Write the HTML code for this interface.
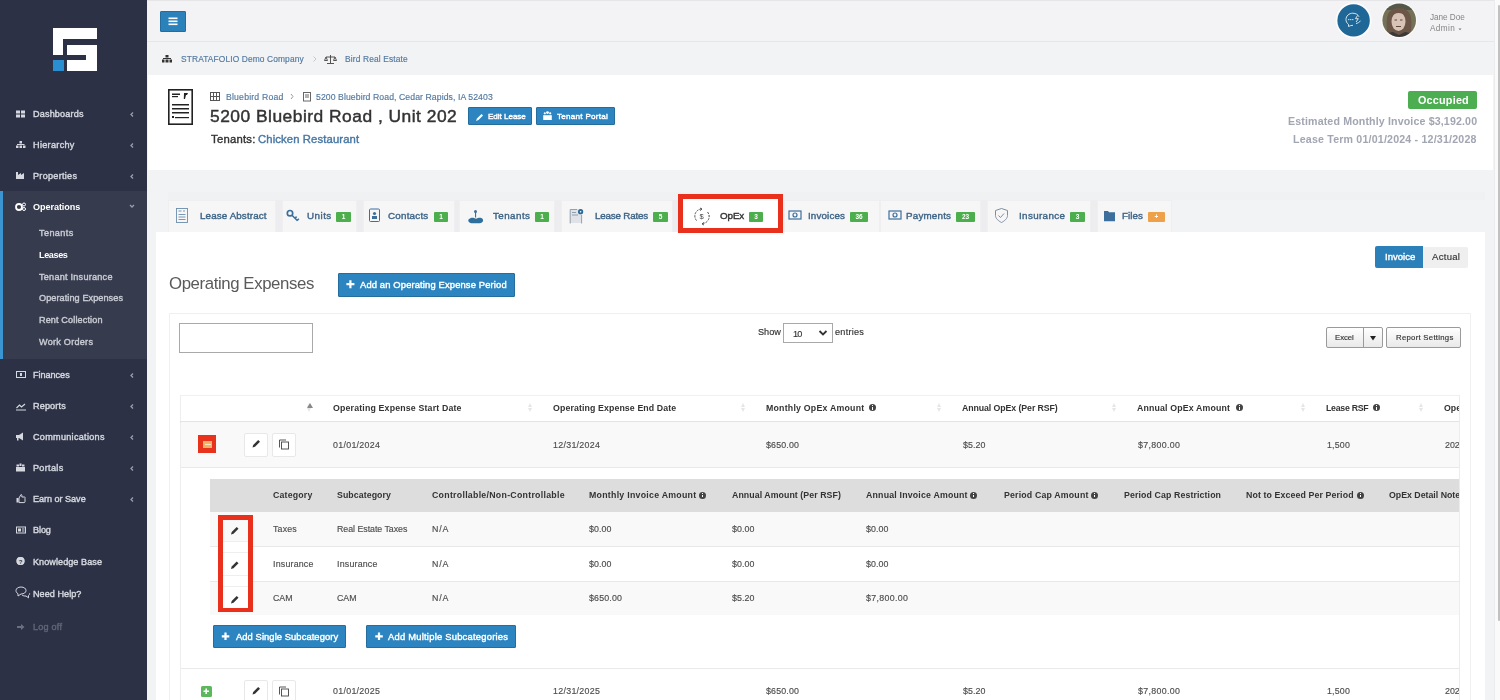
<!DOCTYPE html>
<html><head><meta charset="utf-8"><title>OpEx</title><style>
*{margin:0;padding:0;box-sizing:border-box}
html,body{width:1500px;height:700px;overflow:hidden;background:#f2f3f5;font-family:"Liberation Sans",sans-serif;position:relative}
.a{position:absolute}
.t{position:absolute;white-space:nowrap;line-height:1;will-change:transform}
svg{position:absolute;overflow:visible}
.btn{position:absolute;background:#2c85c0;border:1px solid #256d9c;border-radius:1px}
.badge{position:absolute;background:#4cae4c;border-radius:1px;height:10px}
.badge{color:#fff;font-size:6.5px;font-weight:bold;line-height:10px;text-align:center;will-change:transform}
.tab{position:absolute;top:200px;height:32px;background:#f6f6f7;border:1px solid #efeff1;border-bottom:none}
.sort{position:absolute;width:5px;height:9px}
.sort:before{content:"";position:absolute;left:0;top:0;border-left:2.5px solid transparent;border-right:2.5px solid transparent;border-bottom:4px solid #e6e6e6}
.sort:after{content:"";position:absolute;left:0;top:5px;border-left:2.5px solid transparent;border-right:2.5px solid transparent;border-top:4px solid #e6e6e6}
.info{position:absolute;width:7px;height:7px;border-radius:50%;background:#444}
.info:after{content:"";position:absolute;left:3px;top:3px;width:1.2px;height:2.8px;background:#fff}.info:before{content:"";position:absolute;left:3px;top:1.3px;width:1.2px;height:1px;background:#fff}
.ebtn{position:absolute;width:24px;height:24px;background:#fff;border:1px solid #e8e8e8;border-radius:2px}
.clipbox{position:absolute;left:0;top:0;width:1460px;height:700px;overflow:hidden}
</style></head><body>

<!-- sidebar -->
<div class="a" style="left:0;top:0;width:147px;height:700px;background:#2c3145"></div>
<div class="a" style="left:0;top:191px;width:147px;height:168px;background:#363b4e"></div>
<div class="a" style="left:0;top:191px;width:3px;height:168px;background:#3a95d0"></div>
<svg style="left:0;top:0" width="147" height="80">
 <rect x="53" y="28" width="44" height="11" fill="#fff"/>
 <rect x="53" y="28" width="10" height="27" fill="#fff"/>
 <rect x="67" y="45" width="30" height="26" fill="#fff"/>
 <rect x="63" y="55" width="23" height="5" fill="#2c3145"/>
 <rect x="53" y="60" width="11" height="11" fill="#2a8fd0"/>
</svg>
<!-- sidebar icons -->
<svg style="left:0;top:0" width="147" height="700" fill="#d5d8df">
 <!-- dashboards th-large -->
 <rect x="16" y="110.5" width="4" height="3"/><rect x="21" y="110.5" width="4" height="3"/><rect x="16" y="114.5" width="4" height="3"/><rect x="21" y="114.5" width="4" height="3"/>
 <!-- hierarchy sitemap -->
 <rect x="19.5" y="141" width="2.5" height="2.5"/><rect x="17" y="144" width="7.5" height="1"/><rect x="16" y="145.5" width="2.5" height="2.5"/><rect x="19.5" y="145.5" width="2.5" height="2.5"/><rect x="23" y="145.5" width="2.5" height="2.5"/>
 <!-- properties industry -->
 <path d="M16 172h2v3l3-2v2l3-2v6h-8z"/>
 <!-- operations cogs -->
 <circle cx="19" cy="207" r="3" fill="none" stroke="#fff" stroke-width="1.8"/><circle cx="24" cy="204.5" r="1.5" fill="none" stroke="#fff" stroke-width="1"/><circle cx="24" cy="209" r="1.5" fill="none" stroke="#fff" stroke-width="1"/>
 <!-- finances money -->
 <rect x="16.5" y="371.5" width="9" height="6" fill="none" stroke="#d5d8df" stroke-width="1"/><rect x="20" y="373" width="2" height="3"/>
 <!-- reports chart -->
 <path d="M16 409.5h10v1h-10z"/><path d="M16.5 408l3-3 2 2 3.5-3" fill="none" stroke="#d5d8df" stroke-width="1.2"/>
 <!-- communications bullhorn -->
 <path d="M16 435h3l4-2.5v8l-4-2.5h-3z"/><rect x="17" y="438" width="1.5" height="2.5"/>
 <!-- portals -->
 <rect x="16" y="467" width="9" height="4.5"/><rect x="16.5" y="464.5" width="2.5" height="2"/><rect x="22" y="464.5" width="2.5" height="2"/><rect x="19.5" y="463.5" width="2" height="2.5"/>
 <!-- earn or save thumbs -->
 <path d="M16.5 498h2v4.5h-2z"/><path d="M19 498l2-3.5c1 0 1 1 .8 2.5h2.7c.8 0 .9 1 .5 1.3v3.5c0 .5-.4.8-1 .8H19z" fill="none" stroke="#d5d8df" stroke-width="1"/>
 <!-- blog newspaper -->
 <rect x="16.5" y="527" width="9" height="6" fill="none" stroke="#d5d8df" stroke-width="1"/><rect x="18" y="528.5" width="3" height="3"/><rect x="22" y="528.5" width="2.5" height="1"/><rect x="22" y="530.5" width="2.5" height="1"/>
 <!-- knowledge base -->
 <circle cx="20.5" cy="561" r="4"/>
 <!-- need help bubbles -->
 <path d="M16 590.5c0-2 2-3.5 5-3.5s5 1.5 5 3.5-2 3.5-5 3.5l-3 2v-2.3c-1.3-.7-2-1.8-2-3.2z" fill="none" stroke="#d5d8df" stroke-width="1"/><path d="M22 595c1 .8 2.5 1.2 4 1l2.5 1.8v-2.3c.8-.6 1.2-1.3 1.2-2.2" fill="none" stroke="#d5d8df" stroke-width="1"/>
 <!-- log off -->
 <path d="M17 626h4v-2l3.5 3-3.5 3v-2h-4z" fill="#6b6f7e"/>
 <!-- chevrons -->
 <g fill="none" stroke="#9a9eab" stroke-width="1.3">
 <path d="M133 112.5l-2 2 2 2"/><path d="M133 143.5l-2 2 2 2"/><path d="M133 174.5l-2 2 2 2"/>
 <path d="M130 205l2 2 2-2"/>
 <path d="M133 373.5l-2 2 2 2"/><path d="M133 404.5l-2 2 2 2"/><path d="M133 435.5l-2 2 2 2"/><path d="M133 466.5l-2 2 2 2"/><path d="M133 497.5l-2 2 2 2"/>
 </g>
</svg>
<svg style="left:0;top:0" width="147" height="700"><circle cx="20.5" cy="561" r="4" fill="#d5d8df"/><text x="18.7" y="563.5" font-size="6" font-weight="bold" fill="#2c3145" font-family="Liberation Sans">?</text></svg>

<!-- navbar -->
<div class="a" style="left:147px;top:0;width:1347px;height:42px;background:#f3f3f5;border-top:1px solid #e6e6e8;border-bottom:1px solid #e6e7ea"></div>
<div class="btn" style="left:160px;top:11px;width:26px;height:21px;background:#2b82ba"></div>
<svg style="left:0;top:0" width="200" height="40"><rect x="168.5" y="17.5" width="9" height="1.6" fill="#fff"/><rect x="168.5" y="20.5" width="9" height="1.6" fill="#fff"/><rect x="168.5" y="23.5" width="9" height="1.6" fill="#fff"/></svg>
<!-- breadcrumb bar -->
<div class="a" style="left:147px;top:42px;width:1347px;height:33px;background:#f2f3f5"></div>
<svg style="left:0;top:0" width="420" height="80">
 <g fill="#333"><rect x="165.5" y="55" width="3" height="2.5"/><rect x="163" y="58" width="8" height="1"/><rect x="162" y="59.5" width="2.5" height="3"/><rect x="165.5" y="59.5" width="3" height="3"/><rect x="169.5" y="59.5" width="2.5" height="3"/></g>
 <path d="M313.5 56.5l2.5 2.5-2.5 2.5" fill="none" stroke="#c8c8c8" stroke-width="1"/>
 <g fill="none" stroke="#444" stroke-width="0.9"><path d="M326 57h9M330.5 55v8M327 63.5h7"/><path d="M326 57l-1.5 3.5h3zM335 57l-1.5 3.5h3z"/></g>
</svg>
<!-- top right -->
<svg style="left:0;top:0" width="1500" height="45">
 <defs><filter id="bl" x="-10%" y="-10%" width="120%" height="120%"><feGaussianBlur stdDeviation="0.6"/></filter><clipPath id="av"><circle cx="1399.2" cy="20.2" r="16.8"/></clipPath></defs>
 <circle cx="1353.6" cy="20.4" r="18" fill="#fbfcfd"/>
 <circle cx="1353.6" cy="20.4" r="16.2" fill="#1e6796"/>
 <g fill="none" stroke="#e8f0f6" stroke-width="0.9">
  <path d="M1348.5 26.5v-2.2c-1.8-1.2-2.5-3-2.5-4.8 0-3.6 3-6.3 6.8-6.3 3 0 5.2 1.4 6.2 3.6"/>
  <path d="M1348.5 26.5c1.5-.8 3-1.2 4.5-1.2"/>
  <path d="M1357.5 15.5l-2 3.2h2.8l-2.2 3.3M1356 23.5c1.8-.3 3.5-1.2 4.5-2.8"/>
 </g>
 <g fill="#e8f0f6"><circle cx="1348.8" cy="19.6" r=".7"/><circle cx="1350.8" cy="19.6" r=".7"/><circle cx="1352.8" cy="19.6" r=".7"/></g>
 <circle cx="1399.2" cy="20.2" r="18" fill="#fbfbfb"/>
 <g clip-path="url(#av)"><g filter="url(#bl)">
  <rect x="1380" y="2" width="40" height="36" fill="#737159"/>
  <rect x="1380" y="2" width="40" height="8" fill="#55584a"/>
  <path d="M1388 38c-1-8-2-14-1-20 1-7 6-10 12-10s11 3 12 10c1 6 0 12-1 20z" fill="#6c5646"/>
  <ellipse cx="1398.5" cy="21.5" rx="7" ry="9.5" fill="#d9c2b6"/>
  <path d="M1391.5 17c2-5 5-6.5 8-6.5s5 1 7 5.5c-3-2-5-3-8-3s-5 1.5-7 4z" fill="#6c5646"/>
  <g fill="#5b4a42"><rect x="1394.5" y="19.5" width="2.5" height="1"/><rect x="1400" y="19.5" width="2.5" height="1"/><rect x="1396" y="26" width="5" height="1"/></g>
  <path d="M1384 38c2-4 6-6 9-6l6 3 6-3c3 0 7 2 9 6z" fill="#3a3939"/>
 </g></g>
 <path d="M1458.5 28.5h3l-1.5 1.8z" fill="#777"/>
</svg>

<!-- header panel -->
<div class="a" style="left:148px;top:75px;width:1345px;height:95px;background:#fff"></div>
<svg style="left:0;top:0" width="700" height="170">
 <g fill="none" stroke="#222" stroke-width="1.6"><rect x="168.8" y="89.8" width="23.4" height="34.4"/></g>
 <g fill="#222"><rect x="172" y="93.5" width="8" height="1.5"/><rect x="172" y="96" width="6" height="1.2"/><path d="M184 93h4l-1 2h-1l-1 4h-1.2z"/>
 <rect x="172" y="104" width="17" height="1.5"/><rect x="172" y="108" width="17" height="1.5"/><rect x="172" y="112" width="17" height="1.5"/>
 <rect x="172" y="116" width="2" height="2"/><rect x="175" y="117" width="14" height="1.2"/></g>
 <!-- tiny bluebird icons -->
 <g fill="none" stroke="#555" stroke-width="1"><rect x="210.5" y="92.5" width="9" height="8"/><path d="M210.5 96.5h9M213.5 92.5v8M216.5 92.5v8"/></g>
 <path d="M291 94l2 2.5-2 2.5" fill="none" stroke="#999" stroke-width="1"/>
 <g fill="none" stroke="#666" stroke-width="1"><rect x="303.5" y="92.5" width="7" height="8.5"/><path d="M305 95h4M305 97h4"/></g>
</svg>
<div class="btn" style="left:468px;top:107px;width:64px;height:17.5px"></div>
<div class="btn" style="left:536px;top:107px;width:79px;height:17.5px"></div>
<svg style="left:0;top:0" width="700" height="170">
 <path d="M476 121l1-2.5 4.5-4.5 1.5 1.5-4.5 4.5z" fill="#fff"/>
 <g fill="#fff"><circle cx="544.8" cy="113.3" r="1.1"/><circle cx="547.5" cy="112.6" r="1.4"/><circle cx="550.2" cy="113.3" r="1.1"/><path d="M543.2 115.2h8.6v4.8h-8.6z"/></g>
</svg>
<div class="a" style="left:1408px;top:91px;width:69px;height:18px;background:#4cae50;border-radius:2px"></div>

<!-- tabs -->
<div class="a" style="left:168px;top:192px;width:1317px;height:8px;background:#f0f1f3"></div>
<div class="a" style="left:168px;top:200px;width:1004px;height:32px;background:#ededef"></div>
<div class="tab" style="left:168px;width:108px"></div>
<div class="tab" style="left:282px;width:75px"></div>
<div class="tab" style="left:363px;width:92px"></div>
<div class="tab" style="left:459px;width:96px"></div>
<div class="tab" style="left:561px;width:112px"></div>
<div class="tab" style="left:784px;width:96px"></div>
<div class="tab" style="left:880px;width:101px"></div>
<div class="tab" style="left:987px;width:104px"></div>
<div class="tab" style="left:1097px;width:75px"></div>
<!-- content panel -->
<div class="a" style="left:156px;top:232px;width:1329px;height:468px;background:#fff"></div>
<!-- active tab -->
<div class="a" style="left:678px;top:194px;width:105px;height:39px;border:5px solid #e8301c;background:#fff"></div>

<div class="badge" style="left:336px;top:212px;width:15px">1</div>
<div class="badge" style="left:434px;top:212px;width:14px">1</div>
<div class="badge" style="left:535px;top:212px;width:14px">1</div>
<div class="badge" style="left:653px;top:212px;width:15px">5</div>
<div class="badge" style="left:749px;top:212px;width:14px">3</div>
<div class="badge" style="left:850px;top:212px;width:18px">36</div>
<div class="badge" style="left:956px;top:212px;width:19px">23</div>
<div class="badge" style="left:1070px;top:212px;width:15px">3</div>
<div class="badge" style="left:1148px;top:212px;width:17px;background:#efa14a">+</div>
<svg style="left:0;top:0" width="1200" height="240">
 <g fill="none" stroke="#3d6f9c" stroke-width="1">
  <!-- lease abstract -->
  <rect x="176.5" y="208.5" width="11" height="14" stroke="#6c8cab" stroke-width="0.9"/><path d="M178.5 214.5h7M178.5 217h7M178.5 219.5h7M178.5 211h3M183 211h2" stroke="#6c8cab" stroke-width="0.9"/>
  <!-- key -->
  <circle cx="290" cy="213.2" r="2.7" stroke-width="1.7"/><path d="M292 215.2l5.5 5.5M295 218.2l1.6-1.6M297.2 220.4l1.6-1.6" stroke-width="1.5"/>
  <!-- contacts -->
  <rect x="369.5" y="209" width="10" height="12.5" rx="1"/>
  <!-- insurance shield -->
  <path d="M995.5 210.5l6-2 6 2v5c0 3-3 5.5-6 7-3-1.5-6-4-6-7z" stroke="#7a8ea3"/><path d="M998.5 215.5l2 2 3.5-4" stroke="#7a8ea3"/>
  <!-- opex icon -->
  <path d="M696.5 220.5a7 7 0 0 1 5-11.5M707.5 212a7 7 0 0 1-5 11.5" stroke="#444" stroke-width="1" stroke-dasharray="2.2 1.1"/><path d="M700 208l2 1-1.8 1.6M704 225l-2-1 1.8-1.6" stroke="#444" stroke-width="0.9"/>
 </g>
 <g fill="#3d6f9c">
  <circle cx="374.5" cy="213.5" r="1.6"/><rect x="372" y="216" width="5" height="3"/>
  <!-- tenants -->
  <circle cx="475.5" cy="211.5" r="1.5"/><rect x="475" y="212" width="1.1" height="5.5"/><path d="M468.5 219.5c1.5-1.5 3.5-2 5.5-1.5l2 .8 2-.8c2-.5 4.5 0 5 1.8.5 2-1.5 3.5-4 3.5h-6.5c-3 0-4.8-1.8-4-3.8z" fill="#2f6f9c"/>
  <!-- lease rates -->
  
  <!-- files folder -->
  <path d="M1104 211h4l1 1.2h6v9h-11z"/>
 </g>
 <rect x="570" y="209.5" width="11.5" height="13.5" fill="#dfe3e8"/><g fill="none" stroke="#8a97a5" stroke-width="0.9"><path d="M570.2 223.5v-14h7M581.6 215v8.5"/><path d="M572 212.5h4M572 215h6"/></g><circle cx="580.6" cy="211.7" r="2.6" fill="#2f6a96"/><circle cx="580.6" cy="211.7" r="0.8" fill="#fff"/>
 <g fill="none" stroke="#3d6f9c" stroke-width="1.2"><rect x="789" y="211" width="12" height="8"/><circle cx="795" cy="215" r="2"/><rect x="889" y="211" width="12" height="8"/><circle cx="895" cy="215" r="2"/></g>
 <text x="699.6" y="219.3" font-size="7.5" fill="#444" font-family="Liberation Sans">$</text>
</svg>

<!-- invoice/actual -->
<div class="a" style="left:1375px;top:246px;width:48px;height:22px;background:#2b80b9;border-radius:2px 0 0 2px"></div>
<div class="a" style="left:1423px;top:247px;width:44.5px;height:20.5px;background:#efefef;border-radius:0 2px 2px 0"></div>

<div class="btn" style="left:338px;top:273px;width:177px;height:24px"></div>
<svg style="left:0;top:0" width="600" height="300"><path d="M346.4 284.2h8M350.4 280.2v8" stroke="#fff" stroke-width="2.2"/></svg>

<!-- portlet -->
<div class="a" style="left:168.5px;top:312.5px;width:1302.5px;height:400px;border:1px solid #f0f0f0"></div>
<div class="a" style="left:179px;top:323px;width:134px;height:29.5px;border:1px solid #a9a9a9"></div>
<div class="a" style="left:783px;top:323px;width:50px;height:20px;border:1px solid #a9a9a9"></div>
<svg style="left:0;top:0" width="900" height="400"><path d="M819.5 331l3.5 3.5 3.5-3.5" fill="none" stroke="#333" stroke-width="1.8"/></svg>
<div class="a" style="left:1326px;top:327px;width:56.5px;height:20.5px;border:1px solid #9a9a9a;border-radius:2px;background:linear-gradient(#fff,#e9e9e9)"></div>
<div class="a" style="left:1362.5px;top:327px;width:1px;height:20.5px;background:#9a9a9a"></div>
<div class="a" style="left:1386px;top:327px;width:74.5px;height:20.5px;border:1px solid #9a9a9a;border-radius:2px;background:linear-gradient(#fff,#e9e9e9)"></div>
<svg style="left:0;top:0" width="1500" height="400"><path d="M1370 336h6l-3 4.5z" fill="#222"/></svg>

<!-- table -->
<div class="clipbox">
 <div class="a" style="left:180px;top:395px;width:1400px;height:305px;border-left:1px solid #eeeeee;border-top:1px solid #f0f0f0"></div>
 <div class="a" style="left:180px;top:421px;width:1400px;height:2px;background:#e3e3e3"></div>
 <div class="a" style="left:181px;top:422px;width:1400px;height:45px;background:#f9f9f9"></div>
 <div class="a" style="left:181px;top:466.5px;width:1400px;height:1px;background:#e9e9e9"></div>
 <!-- nested -->
 <div class="a" style="left:210px;top:479px;width:1400px;height:33px;background:#dddddd"></div>
 <div class="a" style="left:210px;top:512px;width:1400px;height:34px;background:#f9f9f9"></div>
 <div class="a" style="left:210px;top:546px;width:1400px;height:1px;background:#e8e8e8"></div>
 <div class="a" style="left:210px;top:581px;width:1400px;height:1px;background:#e8e8e8"></div>
 <div class="a" style="left:210px;top:582px;width:1400px;height:33px;background:#f9f9f9"></div>
 <div class="a" style="left:181px;top:668px;width:1400px;height:1px;background:#e9e9e9"></div>
 <!-- sort icons -->
 <div class="sort" style="left:306.5px;top:403px"></div>
 <div class="sort" style="left:528px;top:403px"></div>
 <div class="sort" style="left:740.5px;top:403px"></div>
 <div class="sort" style="left:936.5px;top:403px"></div>
 <div class="sort" style="left:1112px;top:403px"></div>
 <div class="sort" style="left:1301px;top:403px"></div>
 <div class="sort" style="left:1419px;top:403px"></div>
 <div class="info" style="left:869px;top:404px"></div>
 <div class="info" style="left:1236px;top:404px"></div>
 <div class="info" style="left:1373px;top:404px"></div>
 <div class="info" style="left:699px;top:491.5px"></div>
 <div class="info" style="left:970px;top:491.5px"></div>
 <div class="info" style="left:1091px;top:491.5px"></div>
 <div class="info" style="left:1357px;top:491.5px"></div>
 <div class="t" style="top:403.87px;font-size:8.78px;color:#333333;font-weight:bold;letter-spacing:0.176px;left:332.50px;">Operating Expense Start Date</div>
<div class="t" style="top:403.87px;font-size:8.78px;color:#333333;font-weight:bold;letter-spacing:0.115px;left:553.00px;">Operating Expense End Date</div>
<div class="t" style="top:403.87px;font-size:8.78px;color:#333333;font-weight:bold;letter-spacing:0.224px;left:765.80px;">Monthly OpEx Amount</div>
<div class="t" style="top:403.87px;font-size:8.78px;color:#333333;font-weight:bold;letter-spacing:-0.082px;left:962.00px;">Annual OpEx (Per RSF)</div>
<div class="t" style="top:403.87px;font-size:8.78px;color:#333333;font-weight:bold;letter-spacing:0.160px;left:1137.00px;">Annual OpEx Amount</div>
<div class="t" style="top:403.87px;font-size:8.78px;color:#333333;font-weight:bold;letter-spacing:-0.275px;left:1326.00px;">Lease RSF</div>
<div class="t" style="top:403.87px;font-size:8.78px;color:#333333;font-weight:bold;left:1444.00px;">Operating Expense Period</div>
<div class="t" style="top:440.53px;font-size:8.83px;color:#4d4d4d;-webkit-text-stroke:0.15px #4d4d4d;letter-spacing:0.299px;left:333.00px;">01/01/2024</div>
<div class="t" style="top:440.53px;font-size:8.83px;color:#4d4d4d;-webkit-text-stroke:0.15px #4d4d4d;letter-spacing:0.299px;left:553.00px;">12/31/2024</div>
<div class="t" style="top:440.53px;font-size:8.83px;color:#4d4d4d;-webkit-text-stroke:0.15px #4d4d4d;letter-spacing:0.158px;left:766.00px;">$650.00</div>
<div class="t" style="top:440.53px;font-size:8.83px;color:#4d4d4d;-webkit-text-stroke:0.15px #4d4d4d;letter-spacing:0.069px;left:963.00px;">$5.20</div>
<div class="t" style="top:440.53px;font-size:8.83px;color:#4d4d4d;-webkit-text-stroke:0.15px #4d4d4d;letter-spacing:0.324px;left:1138.00px;">$7,800.00</div>
<div class="t" style="top:440.53px;font-size:8.83px;color:#4d4d4d;-webkit-text-stroke:0.15px #4d4d4d;letter-spacing:0.194px;left:1327.00px;">1,500</div>
<div class="t" style="top:440.53px;font-size:8.83px;color:#4d4d4d;-webkit-text-stroke:0.15px #4d4d4d;left:1445.00px;">2024</div>
<div class="t" style="top:686.53px;font-size:8.83px;color:#4d4d4d;-webkit-text-stroke:0.15px #4d4d4d;letter-spacing:0.299px;left:333.00px;">01/01/2025</div>
<div class="t" style="top:686.53px;font-size:8.83px;color:#4d4d4d;-webkit-text-stroke:0.15px #4d4d4d;letter-spacing:0.299px;left:553.00px;">12/31/2025</div>
<div class="t" style="top:686.53px;font-size:8.83px;color:#4d4d4d;-webkit-text-stroke:0.15px #4d4d4d;letter-spacing:0.158px;left:766.00px;">$650.00</div>
<div class="t" style="top:686.53px;font-size:8.83px;color:#4d4d4d;-webkit-text-stroke:0.15px #4d4d4d;letter-spacing:0.069px;left:963.00px;">$5.20</div>
<div class="t" style="top:686.53px;font-size:8.83px;color:#4d4d4d;-webkit-text-stroke:0.15px #4d4d4d;letter-spacing:0.324px;left:1138.00px;">$7,800.00</div>
<div class="t" style="top:686.53px;font-size:8.83px;color:#4d4d4d;-webkit-text-stroke:0.15px #4d4d4d;letter-spacing:0.194px;left:1327.00px;">1,500</div>
<div class="t" style="top:686.53px;font-size:8.83px;color:#4d4d4d;-webkit-text-stroke:0.15px #4d4d4d;left:1445.00px;">2024</div>
<div class="t" style="top:490.87px;font-size:8.78px;color:#333333;font-weight:bold;letter-spacing:0.188px;left:272.60px;">Category</div>
<div class="t" style="top:490.87px;font-size:8.78px;color:#333333;font-weight:bold;letter-spacing:0.083px;left:337.30px;">Subcategory</div>
<div class="t" style="top:490.87px;font-size:8.78px;color:#333333;font-weight:bold;letter-spacing:0.283px;left:431.70px;">Controllable/Non-Controllable</div>
<div class="t" style="top:490.87px;font-size:8.78px;color:#333333;font-weight:bold;letter-spacing:0.272px;left:589.30px;">Monthly Invoice Amount</div>
<div class="t" style="top:490.87px;font-size:8.78px;color:#333333;font-weight:bold;letter-spacing:0.072px;left:732.30px;">Annual Amount (Per RSF)</div>
<div class="t" style="top:490.87px;font-size:8.78px;color:#333333;font-weight:bold;letter-spacing:0.196px;left:866.00px;">Annual Invoice Amount</div>
<div class="t" style="top:490.87px;font-size:8.78px;color:#333333;font-weight:bold;letter-spacing:0.179px;left:1003.60px;">Period Cap Amount</div>
<div class="t" style="top:490.87px;font-size:8.78px;color:#333333;font-weight:bold;letter-spacing:0.118px;left:1123.50px;">Period Cap Restriction</div>
<div class="t" style="top:490.87px;font-size:8.78px;color:#333333;font-weight:bold;letter-spacing:0.120px;left:1245.50px;">Not to Exceed Per Period</div>
<div class="t" style="top:490.87px;font-size:8.78px;color:#333333;font-weight:bold;left:1388.70px;">OpEx Detail Notes</div>
</div>
<div class="a" style="left:1459px;top:395px;width:1px;height:305px;background:#ececec"></div>
<div class="a" style="left:306.5px;top:403px;border-left:3px solid transparent;border-right:3px solid transparent;border-bottom:5px solid #888"></div>

<!-- row controls -->
<div class="a" style="left:198px;top:435px;width:18px;height:18px;background:#e8321c"></div>
<div class="a" style="left:203px;top:441px;width:9px;height:7px;background:#f4b266"></div>
<div class="a" style="left:204.5px;top:444px;width:6px;height:1px;background:#fbe3c4"></div>
<div class="ebtn" style="left:244px;top:432.5px"></div>
<div class="ebtn" style="left:272px;top:432.5px"></div>
<div class="ebtn" style="left:244px;top:679.5px"></div>
<div class="ebtn" style="left:272px;top:679.5px"></div>
<div class="a" style="left:201px;top:686px;width:10.5px;height:10.5px;background:#5cb85c;border-radius:1.5px"></div>
<svg style="left:0;top:0" width="400" height="700">
 <path d="M203.5 691.2h5.5M206.2 688.5v5.5" stroke="#fff" stroke-width="1.6"/>
 <g fill="#333"><path d="M252.5 447.5l.7-2.5 5-5 1.8 1.8-5 5z"/><path d="M252.5 694.5l.7-2.5 5-5 1.8 1.8-5 5z"/></g>
 <g fill="none" stroke="#444" stroke-width="0.9"><path d="M279.5 447.5v-7.5h6.5"/><rect x="281.5" y="442" width="7" height="7"/><path d="M279.5 694.5v-7.5h6.5"/><rect x="281.5" y="689" width="7" height="7"/></g>
</svg>
<!-- nested edit buttons + red annotation -->
<div class="a" style="left:218px;top:515px;width:35px;height:97px;border:5px solid #e8301c"></div>
<div class="a" style="left:223px;top:519.5px;width:25px;height:88px;background:#fff"></div>
<div class="a" style="left:223px;top:519.5px;width:25px;height:22px;border-bottom:1px solid #eee;background:#f9f9f9"></div>
<div class="a" style="left:223px;top:552px;width:25px;height:24px;border:1px solid #eee;border-left:none;border-right:none"></div>
<div class="a" style="left:223px;top:586px;width:25px;height:21.5px;border-top:1px solid #eee"></div>
<svg style="left:0;top:0" width="400" height="700">
 <g fill="#333"><path d="M231 534.5l.7-2.5 5-5 1.8 1.8-5 5z"/><path d="M231 569l.7-2.5 5-5 1.8 1.8-5 5z"/><path d="M231 603.5l.7-2.5 5-5 1.8 1.8-5 5z"/></g>
</svg>
<div class="btn" style="left:213px;top:625px;width:133px;height:23px"></div>
<div class="btn" style="left:366px;top:625px;width:149.5px;height:23px"></div>
<svg style="left:0;top:0" width="600" height="700"><path d="M221.8 636.3h7.5M225.5 632.6v7.5M375.3 636.3h7.5M379 632.6v7.5" stroke="#fff" stroke-width="2.2"/></svg>

<!-- right edge / scrollbar -->
<div class="a" style="left:1494px;top:0;width:6px;height:700px;background:#fafafa;border-left:1px solid #ececec"></div>
<div class="a" style="left:1497.5px;top:5px;width:2.5px;height:616px;background:#c1c1c1;border-radius:2px"></div>
<div class="t" style="top:110.31px;font-size:9.08px;color:#d5d8df;-webkit-text-stroke:0.4px #d5d8df;letter-spacing:0.164px;left:32.50px;">Dashboards</div>
<div class="t" style="top:141.31px;font-size:9.08px;color:#d5d8df;-webkit-text-stroke:0.4px #d5d8df;letter-spacing:0.321px;left:32.50px;">Hierarchy</div>
<div class="t" style="top:172.31px;font-size:9.08px;color:#d5d8df;-webkit-text-stroke:0.4px #d5d8df;letter-spacing:0.283px;left:32.50px;">Properties</div>
<div class="t" style="top:203.31px;font-size:9.08px;color:#ffffff;font-weight:bold;letter-spacing:-0.067px;left:32.50px;">Operations</div>
<div class="t" style="top:229.31px;font-size:9.08px;color:#c9ccd4;-webkit-text-stroke:0.4px #c9ccd4;letter-spacing:0.395px;left:39.00px;">Tenants</div>
<div class="t" style="top:251.31px;font-size:9.08px;color:#ffffff;font-weight:bold;letter-spacing:-0.375px;left:39.00px;">Leases</div>
<div class="t" style="top:272.81px;font-size:9.08px;color:#c9ccd4;-webkit-text-stroke:0.4px #c9ccd4;letter-spacing:0.252px;left:39.00px;">Tenant Insurance</div>
<div class="t" style="top:294.31px;font-size:9.08px;color:#c9ccd4;-webkit-text-stroke:0.4px #c9ccd4;letter-spacing:0.099px;left:39.00px;">Operating Expenses</div>
<div class="t" style="top:316.31px;font-size:9.08px;color:#c9ccd4;-webkit-text-stroke:0.4px #c9ccd4;letter-spacing:0.134px;left:39.00px;">Rent Collection</div>
<div class="t" style="top:337.81px;font-size:9.08px;color:#c9ccd4;-webkit-text-stroke:0.4px #c9ccd4;letter-spacing:0.264px;left:39.00px;">Work Orders</div>
<div class="t" style="top:371.31px;font-size:9.08px;color:#d5d8df;-webkit-text-stroke:0.4px #d5d8df;letter-spacing:-0.024px;left:32.50px;">Finances</div>
<div class="t" style="top:402.31px;font-size:9.08px;color:#d5d8df;-webkit-text-stroke:0.4px #d5d8df;letter-spacing:0.147px;left:32.50px;">Reports</div>
<div class="t" style="top:433.31px;font-size:9.08px;color:#d5d8df;-webkit-text-stroke:0.4px #d5d8df;letter-spacing:0.294px;left:32.50px;">Communications</div>
<div class="t" style="top:464.31px;font-size:9.08px;color:#d5d8df;-webkit-text-stroke:0.4px #d5d8df;letter-spacing:0.319px;left:32.50px;">Portals</div>
<div class="t" style="top:495.31px;font-size:9.08px;color:#d5d8df;-webkit-text-stroke:0.4px #d5d8df;letter-spacing:-0.028px;left:32.50px;">Earn or Save</div>
<div class="t" style="top:526.31px;font-size:9.08px;color:#d5d8df;-webkit-text-stroke:0.4px #d5d8df;letter-spacing:-0.085px;left:32.50px;">Blog</div>
<div class="t" style="top:557.81px;font-size:9.08px;color:#d5d8df;-webkit-text-stroke:0.4px #d5d8df;letter-spacing:0.061px;left:32.50px;">Knowledge Base</div>
<div class="t" style="top:589.81px;font-size:9.08px;color:#d5d8df;-webkit-text-stroke:0.4px #d5d8df;letter-spacing:0.053px;left:32.50px;">Need Help?</div>
<div class="t" style="top:623.31px;font-size:9.08px;color:#626676;-webkit-text-stroke:0.4px #626676;letter-spacing:0.219px;left:32.50px;">Log off</div>
<div class="t" style="top:55.10px;font-size:8.39px;color:#52789f;-webkit-text-stroke:0.15px #52789f;letter-spacing:0.126px;left:181.00px;">STRATAFOLIO Demo Company</div>
<div class="t" style="top:55.10px;font-size:8.39px;color:#52789f;-webkit-text-stroke:0.15px #52789f;letter-spacing:0.149px;left:345.00px;">Bird Real Estate</div>
<div class="t" style="top:13.85px;font-size:8.21px;color:#858585;letter-spacing:-0.044px;left:1430.00px;">Jane Doe</div>
<div class="t" style="top:24.65px;font-size:8.21px;color:#858585;letter-spacing:0.392px;left:1430.00px;">Admin</div>
<div class="t" style="top:92.95px;font-size:8.68px;color:#52789f;-webkit-text-stroke:0.15px #52789f;letter-spacing:0.197px;left:225.50px;">Bluebird Road</div>
<div class="t" style="top:92.95px;font-size:8.68px;color:#52789f;-webkit-text-stroke:0.15px #52789f;letter-spacing:0.077px;left:315.80px;">5200 Bluebird Road, Cedar Rapids, IA 52403</div>
<div class="t" style="top:108.27px;font-size:17.4px;color:#333333;-webkit-text-stroke:0.45px #333333;letter-spacing:0.491px;left:210.30px;">5200 Bluebird Road , Unit 202</div>
<div class="t" style="top:134.44px;font-size:11.29px;color:#333333;-webkit-text-stroke:0.4px #333333;letter-spacing:0.240px;left:210.50px;">Tenants:</div>
<div class="t" style="top:134.44px;font-size:11.29px;color:#4878a4;-webkit-text-stroke:0.4px #4878a4;letter-spacing:0.120px;left:257.50px;">Chicken Restaurant</div>
<div class="t" style="top:113.45px;font-size:8.09px;color:#ffffff;-webkit-text-stroke:0.4px #ffffff;letter-spacing:-0.036px;left:488.00px;">Edit Lease</div>
<div class="t" style="top:113.45px;font-size:8.09px;color:#ffffff;-webkit-text-stroke:0.4px #ffffff;letter-spacing:0.272px;left:557.30px;">Tenant Portal</div>
<div class="t" style="top:95.36px;font-size:10.8px;color:#ffffff;font-weight:bold;letter-spacing:0.213px;left:1417.80px;">Occupied</div>
<div class="t" style="top:116.00px;font-size:10.63px;color:#a2a5b2;font-weight:bold;letter-spacing:0.142px;right:23.00px;">Estimated Monthly Invoice $3,192.00</div>
<div class="t" style="top:133.80px;font-size:10.63px;color:#a2a5b2;font-weight:bold;letter-spacing:0.193px;right:23.00px;">Lease Term 01/01/2024 - 12/31/2028</div>
<div class="t" style="top:211.00px;font-size:9.8px;color:#3f6587;-webkit-text-stroke:0.4px #3f6587;letter-spacing:0.127px;left:199.50px;">Lease Abstract</div>
<div class="t" style="top:211.00px;font-size:9.8px;color:#3f6587;-webkit-text-stroke:0.4px #3f6587;letter-spacing:0.485px;left:306.70px;">Units</div>
<div class="t" style="top:211.00px;font-size:9.8px;color:#3f6587;-webkit-text-stroke:0.4px #3f6587;letter-spacing:0.229px;left:388.30px;">Contacts</div>
<div class="t" style="top:211.00px;font-size:9.8px;color:#3f6587;-webkit-text-stroke:0.4px #3f6587;letter-spacing:0.442px;left:493.00px;">Tenants</div>
<div class="t" style="top:211.00px;font-size:9.8px;color:#3f6587;-webkit-text-stroke:0.4px #3f6587;letter-spacing:-0.175px;left:594.70px;">Lease Rates</div>
<div class="t" style="top:211.00px;font-size:9.8px;color:#3f6587;-webkit-text-stroke:0.4px #3f6587;letter-spacing:0.147px;left:808.00px;">Invoices</div>
<div class="t" style="top:211.00px;font-size:9.8px;color:#3f6587;-webkit-text-stroke:0.4px #3f6587;letter-spacing:0.200px;left:906.00px;">Payments</div>
<div class="t" style="top:211.00px;font-size:9.8px;color:#3f6587;-webkit-text-stroke:0.4px #3f6587;letter-spacing:0.367px;left:1019.00px;">Insurance</div>
<div class="t" style="top:211.00px;font-size:9.8px;color:#3f6587;-webkit-text-stroke:0.4px #3f6587;letter-spacing:0.069px;left:1122.00px;">Files</div>
<div class="t" style="top:211.00px;font-size:9.8px;color:#333333;-webkit-text-stroke:0.4px #333333;letter-spacing:-0.078px;left:719.70px;">OpEx</div>
<div class="t" style="top:252.22px;font-size:9.54px;color:#ffffff;-webkit-text-stroke:0.4px #ffffff;letter-spacing:0.022px;left:1384.60px;">Invoice</div>
<div class="t" style="top:252.22px;font-size:9.54px;color:#333333;-webkit-text-stroke:0.15px #333333;letter-spacing:0.288px;left:1432.00px;">Actual</div>
<div class="t" style="top:275.58px;font-size:16.8px;color:#5a5a5a;letter-spacing:-0.399px;left:169.40px;">Operating Expenses</div>
<div class="t" style="top:279.74px;font-size:9.4px;color:#ffffff;-webkit-text-stroke:0.4px #ffffff;letter-spacing:0.145px;left:360.00px;">Add an Operating Expense Period</div>
<div class="t" style="top:328.07px;font-size:9.13px;color:#333333;-webkit-text-stroke:0.15px #333333;letter-spacing:0.029px;left:758.20px;">Show</div>
<div class="t" style="top:329.97px;font-size:9.13px;color:#333333;-webkit-text-stroke:0.15px #333333;letter-spacing:-0.839px;left:792.60px;">10</div>
<div class="t" style="top:328.07px;font-size:9.13px;color:#333333;-webkit-text-stroke:0.15px #333333;letter-spacing:0.254px;left:835.00px;">entries</div>
<div class="t" style="top:334.12px;font-size:7.77px;color:#333333;-webkit-text-stroke:0.15px #333333;letter-spacing:-0.051px;left:1335.00px;">Excel</div>
<div class="t" style="top:334.12px;font-size:7.77px;color:#333333;-webkit-text-stroke:0.15px #333333;letter-spacing:0.271px;left:1395.50px;">Report Settings</div>
<div class="t" style="top:524.53px;font-size:8.83px;color:#4d4d4d;-webkit-text-stroke:0.15px #4d4d4d;letter-spacing:0.178px;left:272.60px;">Taxes</div>
<div class="t" style="top:524.53px;font-size:8.83px;color:#4d4d4d;-webkit-text-stroke:0.15px #4d4d4d;letter-spacing:-0.039px;left:337.30px;">Real Estate Taxes</div>
<div class="t" style="top:524.53px;font-size:8.83px;color:#4d4d4d;-webkit-text-stroke:0.15px #4d4d4d;letter-spacing:0.826px;left:431.70px;">N/A</div>
<div class="t" style="top:524.53px;font-size:8.83px;color:#4d4d4d;-webkit-text-stroke:0.15px #4d4d4d;letter-spacing:0.069px;left:589.30px;">$0.00</div>
<div class="t" style="top:524.53px;font-size:8.83px;color:#4d4d4d;-webkit-text-stroke:0.15px #4d4d4d;letter-spacing:0.069px;left:732.30px;">$0.00</div>
<div class="t" style="top:524.53px;font-size:8.83px;color:#4d4d4d;-webkit-text-stroke:0.15px #4d4d4d;letter-spacing:0.069px;left:866.00px;">$0.00</div>
<div class="t" style="top:559.53px;font-size:8.83px;color:#4d4d4d;-webkit-text-stroke:0.15px #4d4d4d;letter-spacing:0.200px;left:272.60px;">Insurance</div>
<div class="t" style="top:559.53px;font-size:8.83px;color:#4d4d4d;-webkit-text-stroke:0.15px #4d4d4d;letter-spacing:0.200px;left:337.30px;">Insurance</div>
<div class="t" style="top:559.53px;font-size:8.83px;color:#4d4d4d;-webkit-text-stroke:0.15px #4d4d4d;letter-spacing:0.826px;left:431.70px;">N/A</div>
<div class="t" style="top:559.53px;font-size:8.83px;color:#4d4d4d;-webkit-text-stroke:0.15px #4d4d4d;letter-spacing:0.069px;left:589.30px;">$0.00</div>
<div class="t" style="top:559.53px;font-size:8.83px;color:#4d4d4d;-webkit-text-stroke:0.15px #4d4d4d;letter-spacing:0.069px;left:732.30px;">$0.00</div>
<div class="t" style="top:559.53px;font-size:8.83px;color:#4d4d4d;-webkit-text-stroke:0.15px #4d4d4d;letter-spacing:0.069px;left:866.00px;">$0.00</div>
<div class="t" style="top:593.53px;font-size:8.83px;color:#4d4d4d;-webkit-text-stroke:0.15px #4d4d4d;letter-spacing:-0.020px;left:272.60px;">CAM</div>
<div class="t" style="top:593.53px;font-size:8.83px;color:#4d4d4d;-webkit-text-stroke:0.15px #4d4d4d;letter-spacing:-0.020px;left:337.30px;">CAM</div>
<div class="t" style="top:593.53px;font-size:8.83px;color:#4d4d4d;-webkit-text-stroke:0.15px #4d4d4d;letter-spacing:0.826px;left:431.70px;">N/A</div>
<div class="t" style="top:593.53px;font-size:8.83px;color:#4d4d4d;-webkit-text-stroke:0.15px #4d4d4d;letter-spacing:0.158px;left:589.30px;">$650.00</div>
<div class="t" style="top:593.53px;font-size:8.83px;color:#4d4d4d;-webkit-text-stroke:0.15px #4d4d4d;letter-spacing:0.069px;left:732.30px;">$5.20</div>
<div class="t" style="top:593.53px;font-size:8.83px;color:#4d4d4d;-webkit-text-stroke:0.15px #4d4d4d;letter-spacing:0.324px;left:866.00px;">$7,800.00</div>
<div class="t" style="top:631.54px;font-size:9.4px;color:#ffffff;-webkit-text-stroke:0.4px #ffffff;letter-spacing:0.072px;left:235.60px;">Add Single Subcategory</div>
<div class="t" style="top:631.54px;font-size:9.4px;color:#ffffff;-webkit-text-stroke:0.4px #ffffff;letter-spacing:0.234px;left:388.30px;">Add Multiple Subcategories</div>
</body></html>
